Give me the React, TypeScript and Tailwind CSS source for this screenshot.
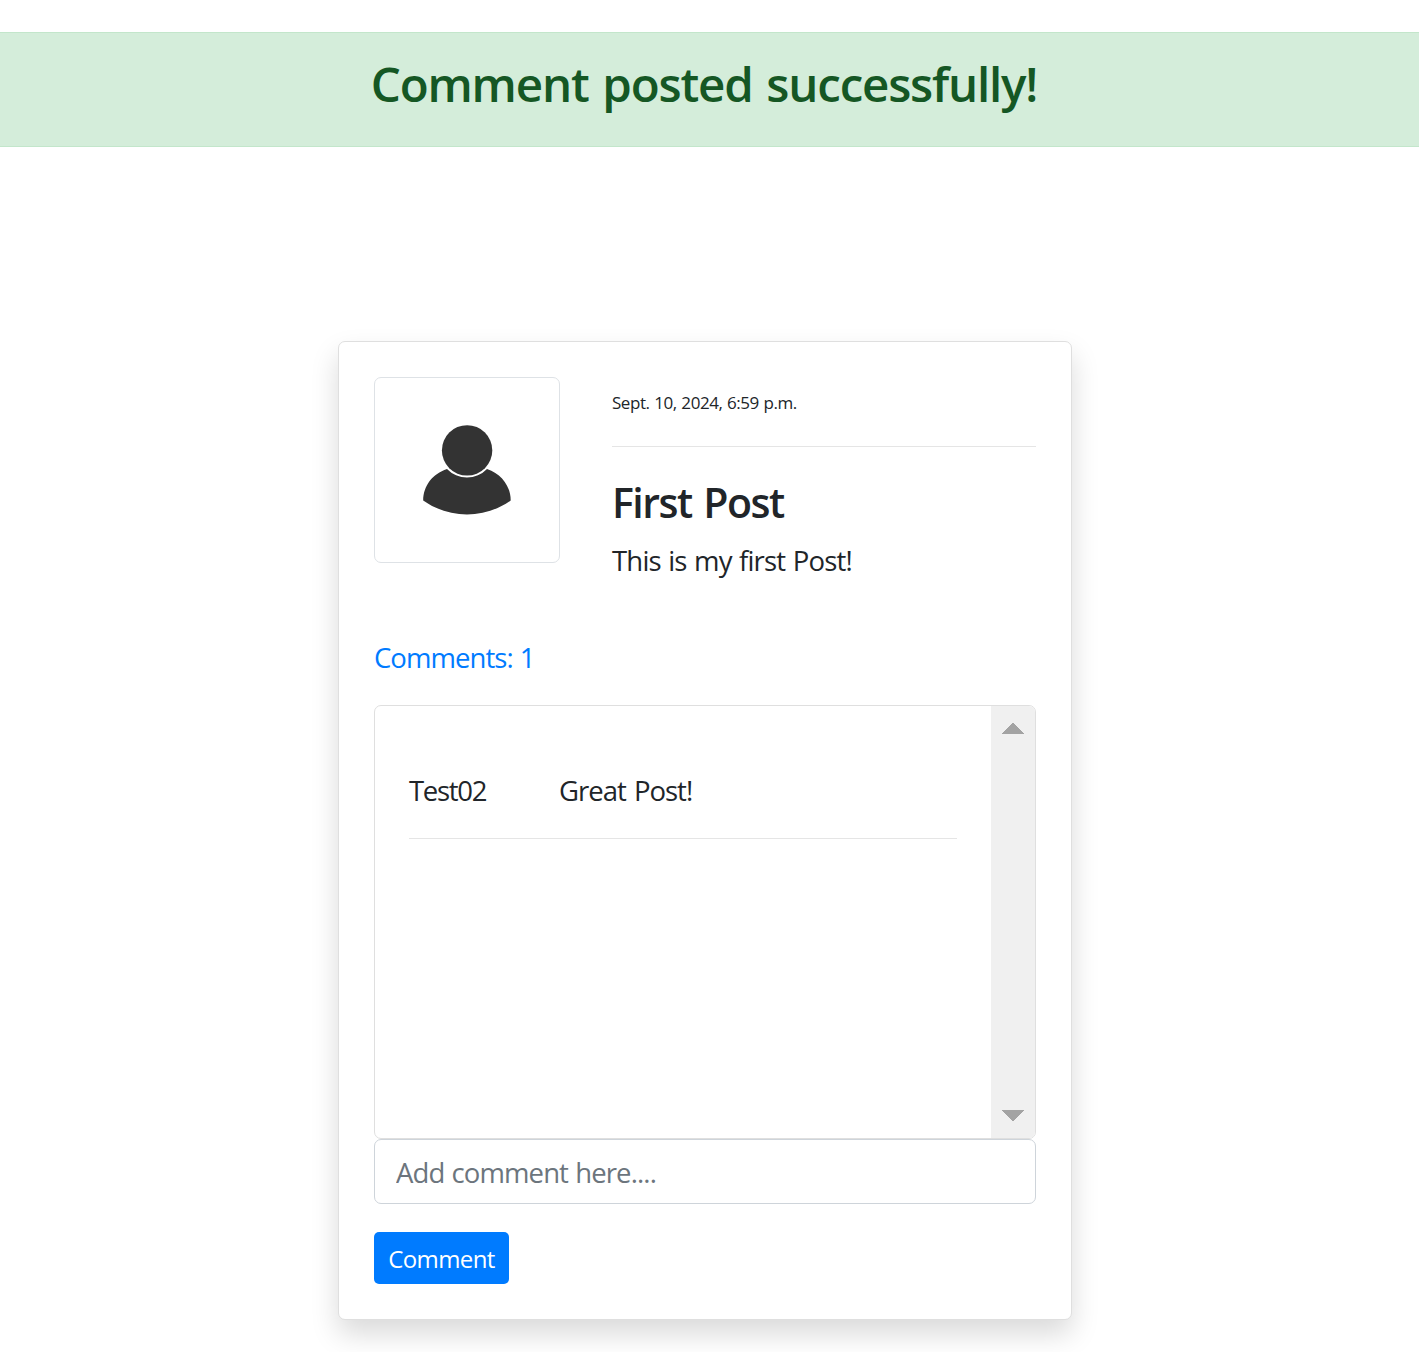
import React from "react";

function Avatar() {
  return (
    <div className="h-[186px] w-[186px] shrink-0 rounded-[7px] border border-[#dee2e6] bg-white">
      <svg viewBox="0 0 184 184" className="block h-[184px] w-[184px]" aria-label="User avatar">
        <path
          d="M72 91 C57.5 95.8 48.2 108 48.2 122.5 C74 141 110 141 135.7 122.5 C135.7 108 126.2 95.8 112 91 A27.6 27.6 0 0 1 72 91 Z"
          fill="#333"
        />
        <circle cx="92.1" cy="72.4" r="25.2" fill="#333" />
      </svg>
    </div>
  );
}

function ScrollTrack() {
  return (
    <div className="flex w-11 shrink-0 flex-col items-center justify-between bg-[#f0f0f0] pt-4 pb-[17px]">
      <svg className="block h-3 w-[22px]" viewBox="0 0 22 12" shapeRendering="crispEdges">
        <path d="M11 0.5L22.5 12H-0.5Z" fill="#a3a3a3" />
      </svg>
      <svg className="block h-[11px] w-[22px]" viewBox="0 0 22 11" shapeRendering="crispEdges">
        <path d="M-0.5 0H22.5L11 11.5Z" fill="#a3a3a3" />
      </svg>
    </div>
  );
}

export default function App() {
  return (
    <div className="h-[1352px] overflow-hidden bg-white pt-8 font-['Open_Sans','Noto_Sans',sans-serif] text-[27.5px] leading-[42px] text-[#212529]">
      <div className="flex h-[115px] justify-center border-y border-[#c3e6cb] bg-[#d4edda] pt-[21px] pr-[11px] text-[#155724]">
        <h3 className="text-[47.5px] leading-[60px] font-semibold tracking-[-1.2px] whitespace-nowrap [word-spacing:2.7px]">
          Comment posted successfully!
        </h3>
      </div>

      <div className="mt-[194px] ml-[338px] flex h-[979px] w-[734px] flex-col rounded-[7px] border border-[#dfdfdf] bg-white px-[35px] pt-[35px] shadow-[0_14px_28px_rgba(0,0,0,0.15)]">
        <div className="flex h-[260px] gap-[52px]">
          <Avatar />
          <div className="flex-1">
            <div className="h-[69px] pt-[5px] text-[17px] tracking-[-0.45px] whitespace-nowrap [word-spacing:0.7px]">
              Sept. 10, 2024, 6:59 p.m.
            </div>
            <hr className="border-t border-[#e5e5e5]" />
            <h4 className="mt-[30px] text-[41px] leading-[50px] font-semibold tracking-[-1.5px] whitespace-nowrap [word-spacing:2.5px]">
              First Post
            </h4>
            <p className="mt-[13px] tracking-[-0.8px] whitespace-nowrap [word-spacing:1px]">
              This is my first Post!
            </p>
          </div>
        </div>

        <a href="#" className="block h-[68px] tracking-[-0.95px] whitespace-nowrap text-[#007bff] [word-spacing:1px]">
          Comments: 1
        </a>

        <div className="flex h-[434px] shrink-0 overflow-hidden rounded-[7px] border border-[#dfdfdf]">
          <div className="flex-1 px-[34px] pt-[64px]">
            <div className="flex h-[68px] whitespace-nowrap">
              <div className="w-[150px] tracking-[-1.3px]">Test02</div>
              <div className="tracking-[-1px] [word-spacing:2px]">Great Post!</div>
            </div>
            <hr className="border-t border-[#e5e5e5]" />
          </div>
          <ScrollTrack />
        </div>

        <input
          type="text"
          placeholder="Add comment here...."
          className="block h-[65px] w-full shrink-0 rounded-[7px] border border-[#ced4da] px-[21px] pt-px tracking-[-0.9px] [word-spacing:1px] placeholder:text-[#6c757d] placeholder:opacity-100"
        />
        <button className="mt-7 h-[52px] w-[135px] rounded-[5px] bg-[#007bff] pt-px text-[24px] leading-[36px] tracking-[-0.6px] text-white">
          Comment
        </button>
      </div>
    </div>
  );
}
